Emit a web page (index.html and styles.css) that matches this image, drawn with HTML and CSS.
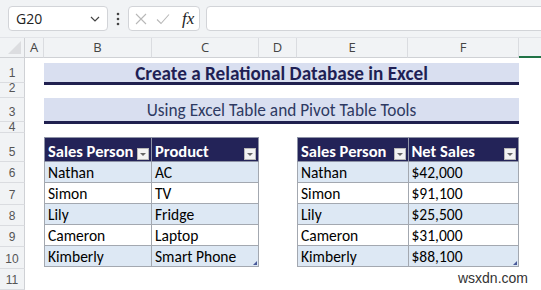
FILE: index.html
```html
<!DOCTYPE html>
<html lang="en">
<head>
  <meta charset="UTF-8">
  <title>Create a Relational Database in Excel</title>
  <link rel="stylesheet" href="styles.css">
</head>
<body>
  <div class="toolbar">
    <div class="namebox">
      <span>G20</span>
      <svg width="10" height="6" viewBox="0 0 10 6"><path d="M1 1l4 4 4-4" stroke="#444" stroke-width="1.2" fill="none"/></svg>
    </div>
    <svg class="dots" width="4" height="14" viewBox="0 0 4 14"><circle cx="2" cy="2" r="1.3" fill="#444"/><circle cx="2" cy="7" r="1.3" fill="#444"/><circle cx="2" cy="12" r="1.3" fill="#444"/></svg>
    <div class="fbuttons">
      <svg width="12" height="12" viewBox="0 0 12 12"><path d="M1 1l10 10M11 1L1 11" stroke="#b8b8b8" stroke-width="1.1" fill="none"/></svg>
      <svg width="14" height="12" viewBox="0 0 14 12"><path d="M1 6.5l4 4L13 1.5" stroke="#b8b8b8" stroke-width="1.1" fill="none"/></svg>
      <span class="fx">fx</span>
    </div>
    <div class="formula"></div>
  </div>

  <div class="sheet">
    <div class="corner"></div>
    <div class="colhead">A</div>
    <div class="colhead">B</div>
    <div class="colhead">C</div>
    <div class="colhead">D</div>
    <div class="colhead">E</div>
    <div class="colhead">F</div>
    <div class="colhead active"></div>

    <div class="rowhead">1</div>
    <div class="rowhead">2</div>
    <div class="rowhead">3</div>
    <div class="rowhead short">4</div>
    <div class="rowhead">5</div>
    <div class="rowhead">6</div>
    <div class="rowhead">7</div>
    <div class="rowhead">8</div>
    <div class="rowhead">9</div>
    <div class="rowhead">10</div>
    <div class="rowhead">11</div>

    <div class="banner title">Create a Relational Database in Excel</div>
    <div class="banner subtitle">Using Excel Table and Pivot Table Tools</div>

    <table class="xltable left">
      <tr>
        <th><div class="hcell">Sales Person<span class="filter"></span></div></th>
        <th><div class="hcell">Product<span class="filter"></span></div></th>
      </tr>
      <tr><td>Nathan</td><td>AC</td></tr>
      <tr><td>Simon</td><td>TV</td></tr>
      <tr><td>Lily</td><td>Fridge</td></tr>
      <tr><td>Cameron</td><td>Laptop</td></tr>
      <tr><td>Kimberly</td><td class="last">Smart Phone</td></tr>
    </table>

    <table class="xltable right">
      <tr>
        <th><div class="hcell">Sales Person<span class="filter"></span></div></th>
        <th><div class="hcell">Net Sales<span class="filter"></span></div></th>
      </tr>
      <tr><td>Nathan</td><td>$42,000</td></tr>
      <tr><td>Simon</td><td>$91,100</td></tr>
      <tr><td>Lily</td><td>$25,500</td></tr>
      <tr><td>Cameron</td><td>$31,000</td></tr>
      <tr><td>Kimberly</td><td class="last">$88,100</td></tr>
    </table>
  </div>

  <div class="watermark">wsxdn.com</div>
</body>
</html>
```

FILE: styles.css
```css
body {
  margin: 0;
  width: 541px;
  height: 290px;
  overflow: hidden;
  background: #fff;
  font-family: Carlito, Lato, sans-serif;
  position: relative;
}

.toolbar {
  height: 38px;
  background: #f1f3f5;
  display: flex;
  align-items: center;
  padding-left: 8px;
  box-sizing: border-box;
  border-bottom: 1px solid #e2e4e8;
}

.namebox {
  width: 100px;
  height: 25px;
  box-sizing: border-box;
  background: #fff;
  border: 1px solid #d2d4d8;
  border-radius: 4px;
  display: flex;
  align-items: center;
  justify-content: space-between;
  padding: 0 7px 0 7px;
  font-family: "Open Sans", sans-serif;
  font-size: 14px;
  color: #222;
}

.dots {
  margin: 0 8px 0 8px;
}

.fbuttons {
  width: 72px;
  height: 25px;
  box-sizing: border-box;
  background: #fff;
  border: 1px solid #d2d4d8;
  border-radius: 4px;
  display: flex;
  align-items: center;
  gap: 9px;
  padding-left: 6px;
}

.fx {
  font-family: "Liberation Serif", serif;
  font-style: italic;
  font-size: 17px;
  color: #222;
  margin-left: 3px;
}

.formula {
  flex: 1;
  height: 25px;
  box-sizing: border-box;
  background: #fff;
  border: 1px solid #d2d4d8;
  border-radius: 4px;
  margin-left: 6px;
  margin-right: -10px;
}

.sheet {
  display: grid;
  grid-template-columns: 25px 19px 108px 107px 38px 111px 111px 1fr;
  grid-template-rows: 20px 25px 15px 24px 11px 29px 21px 22px 21px 21px 22px 21px;
}

.corner {
  background: #f1f3f5;
  border-right: 1px solid #cfd1d5;
  border-bottom: 1px solid #cfd1d5;
  position: relative;
}

.corner::after {
  content: "";
  position: absolute;
  right: 3px;
  bottom: 3px;
  border-left: 13px solid transparent;
  border-bottom: 13px solid #dcdde0;
}

.colhead {
  background: #f1f3f5;
  border-right: 1px solid #dadce0;
  border-bottom: 1px solid #cfd1d5;
  font-family: "Open Sans", sans-serif;
  font-size: 13px;
  color: #444;
  text-align: center;
  line-height: 19px;
}

.colhead.active {
  border-right: none;
  border-bottom: 2px solid #217346;
}

.rowhead {
  grid-column: 1;
  background: #f1f3f5;
  border-right: 1px solid #cfd1d5;
  border-bottom: 1px solid #dadce0;
  font-family: "Liberation Sans", sans-serif;
  font-size: 12px;
  color: #555;
  display: flex;
  align-items: flex-end;
  justify-content: center;
  padding-bottom: 3px;
  box-sizing: border-box;
  line-height: 12px;
}

.rowhead.short {
  align-items: center;
  padding-bottom: 0;
}

.banner {
  grid-column: 3 / 8;
  background: #d9dff0;
  border-bottom: 3px solid #20204f;
  text-align: center;
  align-self: start;
}

.title {
  grid-row: 2;
  margin-top: 5px;
  height: 19px;
  line-height: 21px;
  font-weight: bold;
  font-size: 19.2px;
  color: #1f1f55;
}

.subtitle {
  grid-row: 4;
  height: 23px;
  line-height: 25px;
  font-size: 17.3px;
  color: #2e3a62;
}

.xltable {
  grid-row: 6 / 12;
  align-self: start;
  margin-top: 4px;
  border-collapse: collapse;
  table-layout: fixed;
  font-size: 15.5px;
  color: #000;
}

.xltable.left {
  grid-column: 3 / 5;
  width: 215px;
}

.xltable.right {
  grid-column: 6 / 8;
  width: 222px;
}

.xltable th,
.xltable td {
  border: 1px solid #a3a8b0;
  padding: 0 0 0 3px;
  text-align: left;
  white-space: nowrap;
}

.xltable th {
  background: #232358;
  color: #fff;
  height: 23px;
  font-size: 16.5px;
  border-color: #8e93a6;
}

.hcell {
  display: flex;
  justify-content: space-between;
  align-items: flex-end;
  padding-right: 2px;
  height: 22px;
}

.filter {
  width: 12px;
  height: 12px;
  box-sizing: border-box;
  background: #f3f3f3;
  border: 1px solid #b8b8b8;
  position: relative;
  margin-bottom: 1px;
}

.filter::after {
  content: "";
  position: absolute;
  left: 2px;
  top: 4px;
  border-left: 3px solid transparent;
  border-right: 3px solid transparent;
  border-top: 3px solid #666;
}

.xltable td {
  height: 20px;
}

.xltable tr:nth-child(even) td {
  background: #dde8f4;
}

.xltable td.last {
  position: relative;
}

.xltable td.last::after {
  content: "";
  position: absolute;
  right: 1px;
  bottom: 1px;
  border-left: 4px solid transparent;
  border-bottom: 4px solid #4a5a99;
}

.watermark {
  position: absolute;
  right: 13px;
  bottom: 4px;
  font-family: "Liberation Sans", sans-serif;
  font-size: 14px;
  color: #333;
}
```
